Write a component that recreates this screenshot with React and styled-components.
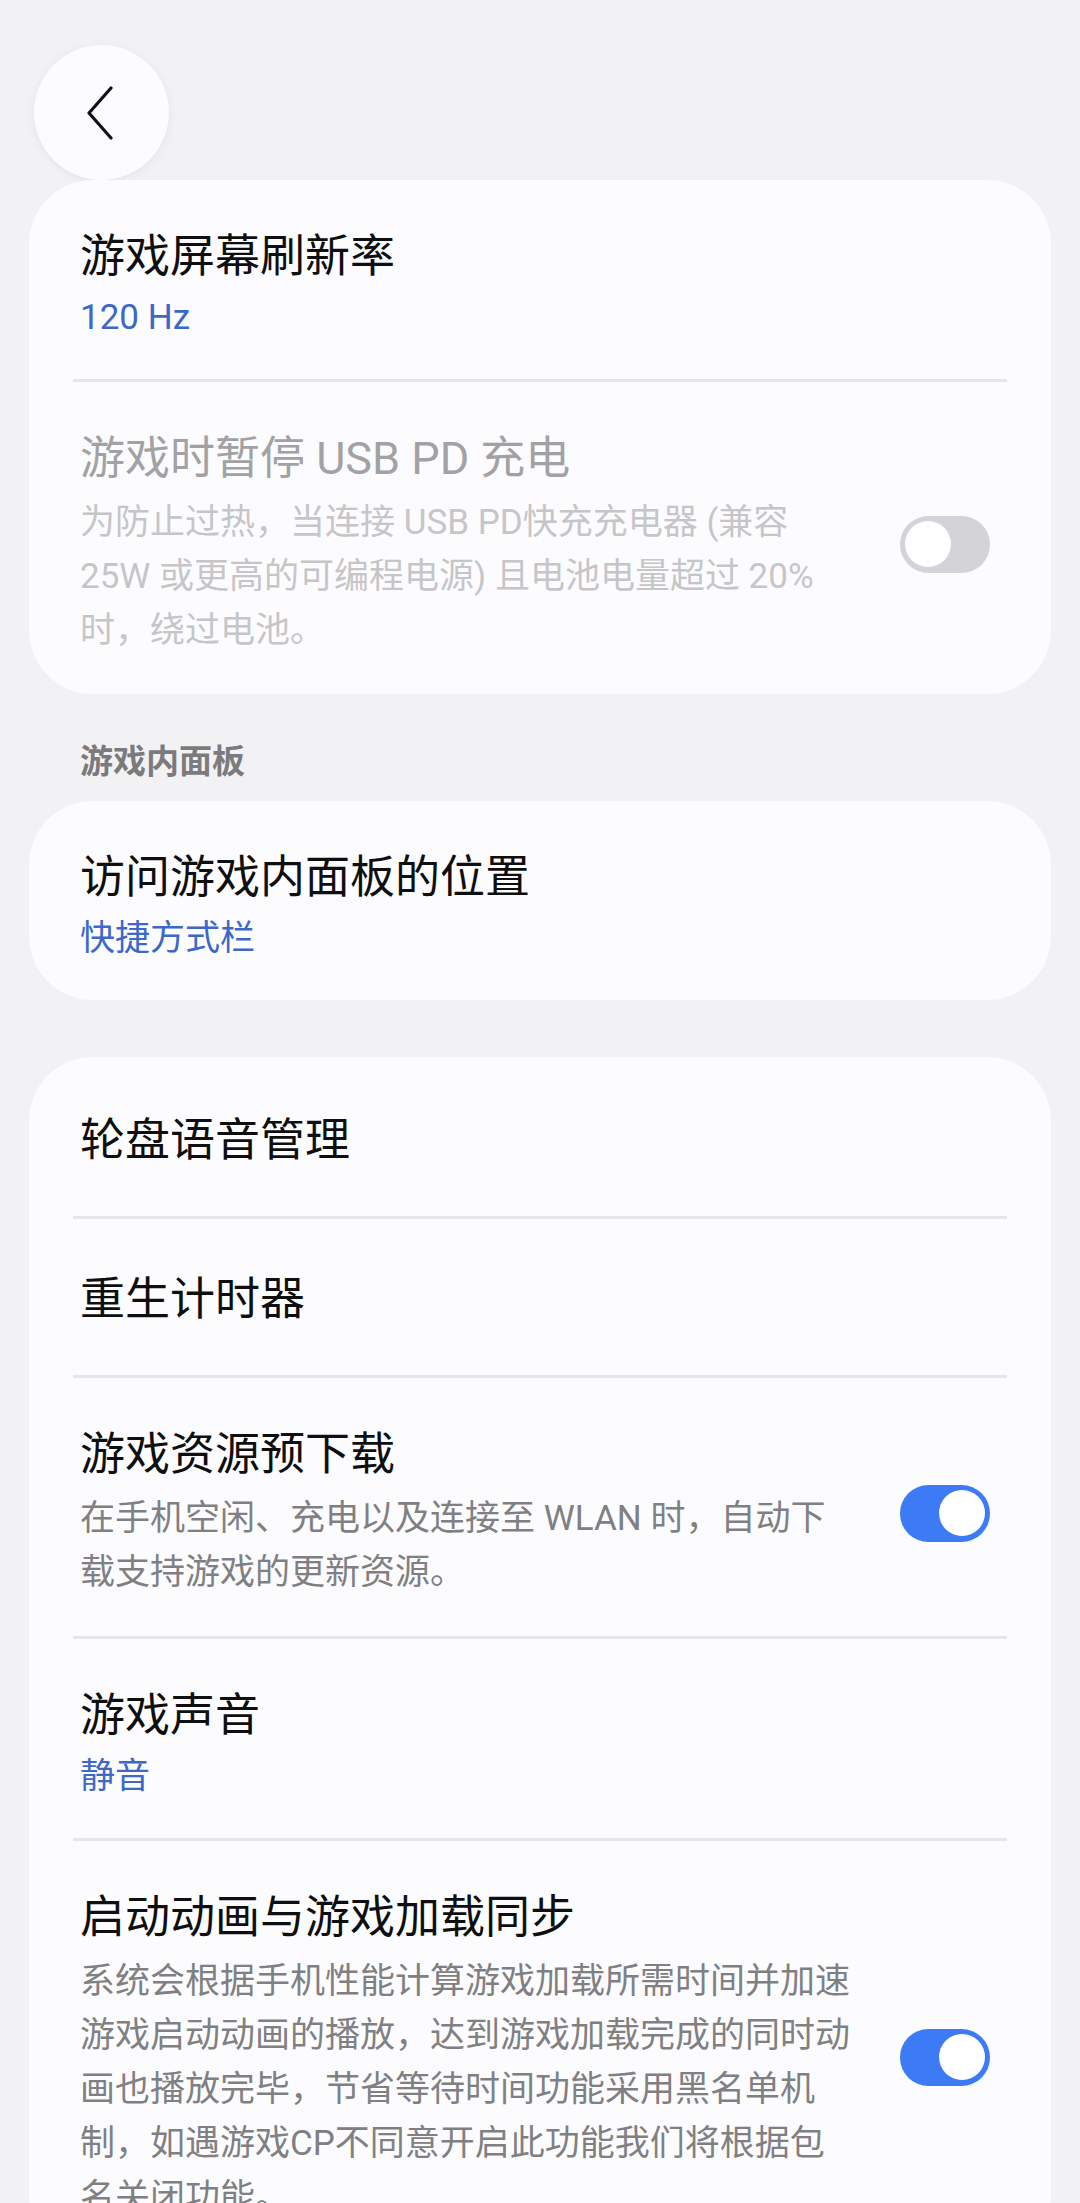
import React from 'react';
import styled, { createGlobalStyle } from 'styled-components';

const GlobalStyle = createGlobalStyle`
	html, body {
		margin: 0;
		padding: 0;
		background: #f2f2f4;
	}
	body {
		font-family: Roboto, "Noto Sans CJK SC", sans-serif;
		-webkit-font-smoothing: antialiased;
	}
`;

const Page = styled.div`
	width: 1080px;
	height: 2203px;
	overflow: hidden;
	box-sizing: border-box;
	padding: 0 29px;
	background: #f2f2f4;
`;

const Header = styled.div`
	height: 180px;
	padding-top: 45px;
	padding-left: 5px;
	box-sizing: border-box;
`;

const BackButton = styled.button`
	width: 135px;
	height: 135px;
	border-radius: 50%;
	border: none;
	background: #fcfcfe;
	box-shadow: 0 2px 10px rgba(0, 0, 0, 0.06);
	display: flex;
	align-items: center;
	justify-content: center;
	padding: 0;
	padding-right: 4px;
`;

const Card = styled.div`
	background: #fcfcfe;
	border-radius: 64px;
	padding: 0 44px;
	margin-bottom: ${(p) => p.gap || 0}px;
`;

const Row = styled.div`
	display: flex;
	align-items: center;
	padding: ${(p) => (p.single ? '52px 17px 46px 7px' : '48px 17px 36px 7px')};
	border-top: ${(p) => (p.first ? 'none' : '3px solid #e6e6e9')};
`;

const Text = styled.div`
	flex: 1;
	min-width: 0;
`;

const Title = styled.div`
	font-size: 45px;
	line-height: 58px;
	color: ${(p) => (p.disabled ? '#a2a2a4' : '#0f0f0f')};
`;

const Value = styled.div`
	font-size: 35px;
	line-height: 50px;
	margin-top: 7px;
	color: #3d68c8;
`;

const Desc = styled.div`
	font-size: 35px;
	line-height: 54px;
	margin-top: 8px;
	width: 775px;
	color: ${(p) => (p.disabled ? '#c6c6c8' : '#808082')};
`;

const Section = styled.div`
	font-size: 33px;
	font-weight: 700;
	color: #7b7b7d;
	line-height: 46px;
	padding: 45px 0 0 51px;
	height: 107px;
	box-sizing: border-box;
`;

const Track = styled.div`
	flex: none;
	width: 90px;
	height: 57px;
	border-radius: 29px;
	background: ${(p) => (p.on ? '#3c7bf5' : '#d3d3d8')};
	display: flex;
	align-items: center;
	justify-content: ${(p) => (p.on ? 'flex-end' : 'flex-start')};
	padding: 0 5px;
	box-sizing: border-box;
	margin-left: 20px;
`;

const Thumb = styled.div`
	width: 46px;
	height: 46px;
	border-radius: 50%;
	background: #ffffff;
`;

const Switch = ({ on }) => (
	<Track on={on ? 1 : 0}>
		<Thumb />
	</Track>
);

export default () => {
	return (
		<Page>
			<GlobalStyle />
			<Header>
				<BackButton>
					<svg width="30" height="54" viewBox="0 0 30 54" fill="none">
						<path d="M26 2 L4 27 L26 52" stroke="#111" strokeWidth="3.2" strokeLinecap="round" strokeLinejoin="round" />
					</svg>
				</BackButton>
			</Header>
			<Card>
				<Row first>
					<Text>
						<Title>游戏屏幕刷新率</Title>
						<Value>120 Hz</Value>
					</Text>
				</Row>
				<Row>
					<Text>
						<Title disabled>游戏时暂停 USB PD 充电</Title>
						<Desc disabled>为防止过热，当连接 USB PD快充充电器 (兼容 25W 或更高的可编程电源) 且电池电量超过 20% 时，绕过电池。</Desc>
					</Text>
					<Switch />
				</Row>
			</Card>
			<Section>游戏内面板</Section>
			<Card gap={57}>
				<Row first>
					<Text>
						<Title>访问游戏内面板的位置</Title>
						<Value>快捷方式栏</Value>
					</Text>
				</Row>
			</Card>
			<Card>
				<Row first single style={{ paddingTop: 55 }}>
					<Text>
						<Title>轮盘语音管理</Title>
					</Text>
				</Row>
				<Row single>
					<Text>
						<Title>重生计时器</Title>
					</Text>
				</Row>
				<Row>
					<Text>
						<Title>游戏资源预下载</Title>
						<Desc>在手机空闲、充电以及连接至 WLAN 时，自动下载支持游戏的更新资源。</Desc>
					</Text>
					<Switch on />
				</Row>
				<Row>
					<Text>
						<Title>游戏声音</Title>
						<Value>静音</Value>
					</Text>
				</Row>
				<Row>
					<Text>
						<Title>启动动画与游戏加载同步</Title>
						<Desc>系统会根据手机性能计算游戏加载所需时间并加速游戏启动动画的播放，达到游戏加载完成的同时动画也播放完毕，节省等待时间功能采用黑名单机制，如遇游戏CP不同意开启此功能我们将根据包名关闭功能。</Desc>
					</Text>
					<Switch on />
				</Row>
			</Card>
		</Page>
	);
};
